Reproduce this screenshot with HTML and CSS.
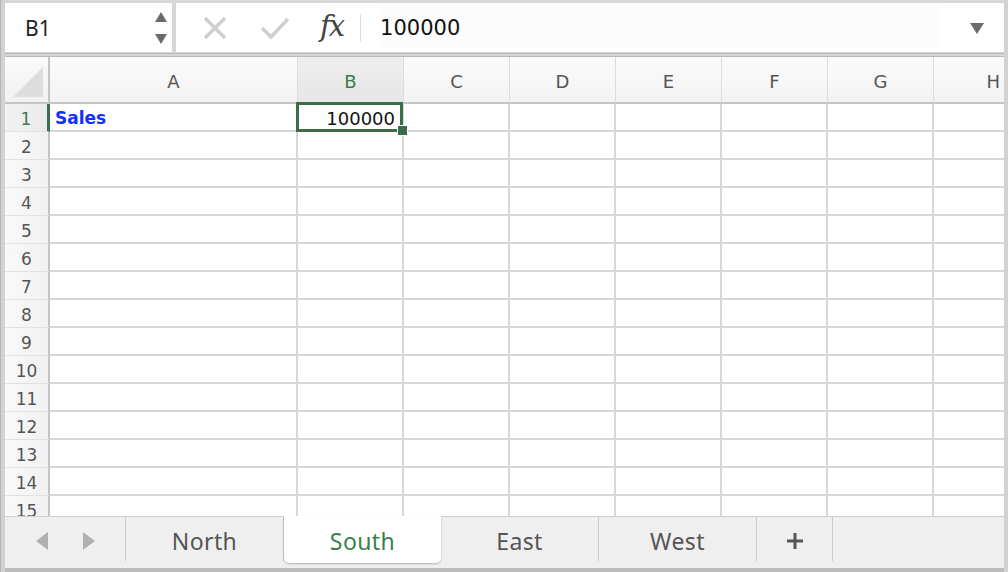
FILE: index.html
```html
<!DOCTYPE html>
<html>
<head>
<meta charset="utf-8">
<link rel="stylesheet" href="styles.css">
</head>
<body>
<div class="window">
  <div class="toolbar">
    <div class="namebox">
      <span class="name">B1</span>
      <span class="spin">
        <svg width="14" height="36" viewBox="0 0 14 36"><path d="M7 2 L13 12 L1 12 Z" fill="#6b6b6b"/><path d="M1 24 L13 24 L7 34 Z" fill="#6b6b6b"/></svg>
      </span>
    </div>
    <div class="formula">
      <span class="ficon x">
        <svg width="26" height="26" viewBox="0 0 26 26"><path d="M3 3 L23 23 M23 3 L3 23" stroke="#cfcfcf" stroke-width="3.6" fill="none"/></svg>
      </span>
      <span class="ficon check">
        <svg width="30" height="24" viewBox="0 0 30 24"><path d="M2 12 L11 21 L28 3" stroke="#cfcfcf" stroke-width="3.6" fill="none"/></svg>
      </span>
      <span class="fx">fx</span>
      <span class="fsep"></span>
      <span class="fvalue">100000</span>
      <span class="fdrop">
        <svg width="14" height="12" viewBox="0 0 14 12"><path d="M0 1 L14 1 L7 12 Z" fill="#6b6b6b"/></svg>
      </span>
    </div>
  </div>

  <div class="sheet">
    <div class="grid">
      <div class="corner"><span class="tri"></span></div>
      <div class="ch">A</div>
      <div class="ch sel">B</div>
      <div class="ch">C</div>
      <div class="ch">D</div>
      <div class="ch">E</div>
      <div class="ch">F</div>
      <div class="ch">G</div>
      <div class="ch last">H</div>

      <div class="rh sel">1</div>
      <div class="c"><span class="sales">Sales</span></div>
      <div class="c num active">100000<span class="selbox"></span><span class="handle"></span></div>
      <div class="c"></div><div class="c"></div><div class="c"></div><div class="c"></div><div class="c"></div><div class="c last"></div>

      <div class="rh">2</div><div class="c"></div><div class="c"></div><div class="c"></div><div class="c"></div><div class="c"></div><div class="c"></div><div class="c"></div><div class="c last"></div>
      <div class="rh">3</div><div class="c"></div><div class="c"></div><div class="c"></div><div class="c"></div><div class="c"></div><div class="c"></div><div class="c"></div><div class="c last"></div>
      <div class="rh">4</div><div class="c"></div><div class="c"></div><div class="c"></div><div class="c"></div><div class="c"></div><div class="c"></div><div class="c"></div><div class="c last"></div>
      <div class="rh">5</div><div class="c"></div><div class="c"></div><div class="c"></div><div class="c"></div><div class="c"></div><div class="c"></div><div class="c"></div><div class="c last"></div>
      <div class="rh">6</div><div class="c"></div><div class="c"></div><div class="c"></div><div class="c"></div><div class="c"></div><div class="c"></div><div class="c"></div><div class="c last"></div>
      <div class="rh">7</div><div class="c"></div><div class="c"></div><div class="c"></div><div class="c"></div><div class="c"></div><div class="c"></div><div class="c"></div><div class="c last"></div>
      <div class="rh">8</div><div class="c"></div><div class="c"></div><div class="c"></div><div class="c"></div><div class="c"></div><div class="c"></div><div class="c"></div><div class="c last"></div>
      <div class="rh">9</div><div class="c"></div><div class="c"></div><div class="c"></div><div class="c"></div><div class="c"></div><div class="c"></div><div class="c"></div><div class="c last"></div>
      <div class="rh">10</div><div class="c"></div><div class="c"></div><div class="c"></div><div class="c"></div><div class="c"></div><div class="c"></div><div class="c"></div><div class="c last"></div>
      <div class="rh">11</div><div class="c"></div><div class="c"></div><div class="c"></div><div class="c"></div><div class="c"></div><div class="c"></div><div class="c"></div><div class="c last"></div>
      <div class="rh">12</div><div class="c"></div><div class="c"></div><div class="c"></div><div class="c"></div><div class="c"></div><div class="c"></div><div class="c"></div><div class="c last"></div>
      <div class="rh">13</div><div class="c"></div><div class="c"></div><div class="c"></div><div class="c"></div><div class="c"></div><div class="c"></div><div class="c"></div><div class="c last"></div>
      <div class="rh">14</div><div class="c"></div><div class="c"></div><div class="c"></div><div class="c"></div><div class="c"></div><div class="c"></div><div class="c"></div><div class="c last"></div>
      <div class="rh">15</div><div class="c"></div><div class="c"></div><div class="c"></div><div class="c"></div><div class="c"></div><div class="c"></div><div class="c"></div><div class="c last"></div>
    </div>
  </div>

  <div class="tabbar">
    <div class="nav">
      <svg width="14" height="20" viewBox="0 0 14 20"><path d="M13 1 L13 19 L1 10 Z" fill="#b0b0b0"/></svg>
      <svg width="14" height="20" viewBox="0 0 14 20"><path d="M1 1 L1 19 L13 10 Z" fill="#b0b0b0"/></svg>
    </div>
    <div class="tab">North</div>
    <div class="tab active">South</div>
    <div class="tab">East</div>
    <div class="tab">West</div>
    <div class="tab add">
      <svg width="18" height="18" viewBox="0 0 18 18"><path d="M9 1 V17 M1 9 H17" stroke="#555" stroke-width="3" fill="none"/></svg>
    </div>
    <div class="tabrest"></div>
  </div>
</div>
</body>
</html>
```

FILE: styles.css
```css
* { box-sizing: border-box; }
html, body { margin: 0; padding: 0; }
body {
  width: 1008px;
  height: 572px;
  overflow: hidden;
  background: #cbcbcb;
  font-family: "DejaVu Sans", "Liberation Sans", sans-serif;
}
.window {
  width: 1008px;
  height: 572px;
  padding: 0 4px 0 4px;
  border-left: 1px solid #b5b5b5;
  display: flex;
  flex-direction: column;
  background: #d2d2d2;
}

/* toolbar */
.toolbar {
  height: 57px;
  display: flex;
  padding-top: 3px;
  gap: 4px;
  border-bottom: 4px double #b9b9b9;
  background: #d6d6d6;
}
.namebox {
  width: 167px;
  height: 49px;
  background: #fff;
  display: flex;
  align-items: center;
  padding-left: 20px;
  padding-right: 0;
}
.name {
  flex: 1;
  font-family: "Noto Sans", "Liberation Sans", sans-serif;
  font-size: 21px;
  color: #222;
}
.spin { display: flex; width: 18px; }
.formula {
  flex: 1;
  height: 49px;
  background: #fff;
  display: flex;
  align-items: center;
  padding-left: 26px;
}
.ficon { display: flex; }
.ficon.x { margin-right: 32px; }
.ficon.check { margin-right: 30px; }
.fx {
  font-family: "DejaVu Serif", "Liberation Serif", serif;
  font-style: italic;
  font-size: 29px;
  color: #444;
  letter-spacing: -2px;
  margin-top: -4px;
}
.fsep {
  width: 1px;
  height: 28px;
  background: #dcdcdc;
  margin-left: 17px;
  margin-right: 19px;
}
.fvalue {
  flex: 1;
  font-family: "DejaVu Sans", "Liberation Sans", sans-serif;
  font-size: 21px;
  color: #111;
  align-self: stretch;
  display: flex;
  align-items: center;
  background: #fcfcfc;
  margin: 4px 30px 4px 0;
  padding-left: 0;
}
.fdrop { display: flex; margin-right: 20px; }

/* sheet */
.sheet {
  height: 459px;
  overflow: hidden;
  background: #fff;
}
.grid {
  display: grid;
  grid-template-columns: 45px 248px 106px 106px 106px 106px 106px 106px 1fr;
  grid-template-rows: 47px;
  grid-auto-rows: 28px;
}
.corner {
  background: linear-gradient(#fafafa, #f1f1f1);
  border-right: 2px solid #c4c4c4;
  border-bottom: 2px solid #c4c4c4;
  position: relative;
}
.tri {
  position: absolute;
  right: 5px;
  bottom: 5px;
  width: 0;
  height: 0;
  border-left: 30px solid transparent;
  border-bottom: 30px solid #dddddd;
}
.ch {
  background: linear-gradient(#fbfbfb, #f3f3f3);
  border-right: 1px solid #dcdcdc;
  border-bottom: 2px solid #c4c4c4;
  display: flex;
  align-items: center;
  justify-content: center;
  font-size: 18px;
  color: #555;
  padding-top: 4px;
}
.ch.sel {
  background: linear-gradient(#efefef, #e6e6e6);
  color: #3c7a4b;
}
.ch.last { justify-content: flex-end; padding-right: 4px; border-right: none; }
.rh {
  background: linear-gradient(90deg, #f9f9f9, #f1f1f1);
  border-right: 2px solid #c4c4c4;
  border-bottom: 1px solid #e2e2e2;
  display: flex;
  align-items: center;
  justify-content: center;
  font-size: 17px;
  color: #555;
  padding-top: 2px;
}
.rh.sel {
  color: #3c7a4b;
  border-right: 3px solid #3d7049;
  background: linear-gradient(90deg, #f2f2f2, #eaeaea);
}
.c {
  border-right: 2px solid #d8d8d8;
  border-bottom: 2px solid #d8d8d8;
  display: flex;
  align-items: center;
  font-size: 18px;
  position: relative;
}
.c.last { border-right: none; }
.sales {
  color: #1030ff;
  font-weight: bold;
  font-size: 17px;
  padding-left: 5px;
  padding-top: 2px;
}
.num {
  justify-content: flex-end;
  padding-right: 7px;
  padding-top: 2px;
  color: #111;
}
.active { z-index: 3; }
.selbox {
  position: absolute;
  left: -2px;
  top: -2px;
  right: -1px;
  bottom: -2px;
  border: 3px solid #3b6e46;
}
.handle {
  position: absolute;
  right: -6px;
  bottom: -6px;
  width: 11px;
  height: 11px;
  background: #3b6e46;
  border: 1px solid #fff;
}

/* tabs */
.tabbar {
  height: 56px;
  display: flex;
  background: #efefef;
  border-top: 1px solid #cfcfcf;
  border-bottom: 4px solid #bcbcbc;
  font-family: "Noto Sans", "Liberation Sans", sans-serif;
}
.nav {
  width: 121px;
  display: flex;
  align-items: center;
  justify-content: center;
  gap: 33px;
  padding-bottom: 4px;
  border-right: 1px solid #cbcbcb;
  margin-bottom: 7px;
  padding-top: 7px;
}
.tab {
  width: 158px;
  display: flex;
  align-items: center;
  justify-content: center;
  font-size: 23px;
  letter-spacing: 0.4px;
  color: #555;
  border-right: 1px solid #cbcbcb;
  margin-bottom: 7px;
  padding-top: 3px;
}
.tab.active {
  background: #fff;
  color: #3a8049;
  border-right: none;
  margin-bottom: 5px;
  margin-top: -1px;
  border-radius: 0 0 5px 5px;
  box-shadow: 0 1px 2px rgba(0,0,0,0.25);
  padding-top: 2px;
  width: 157px;
}
.tab.add { width: 76px; }
.tabrest { flex: 1; }
```
